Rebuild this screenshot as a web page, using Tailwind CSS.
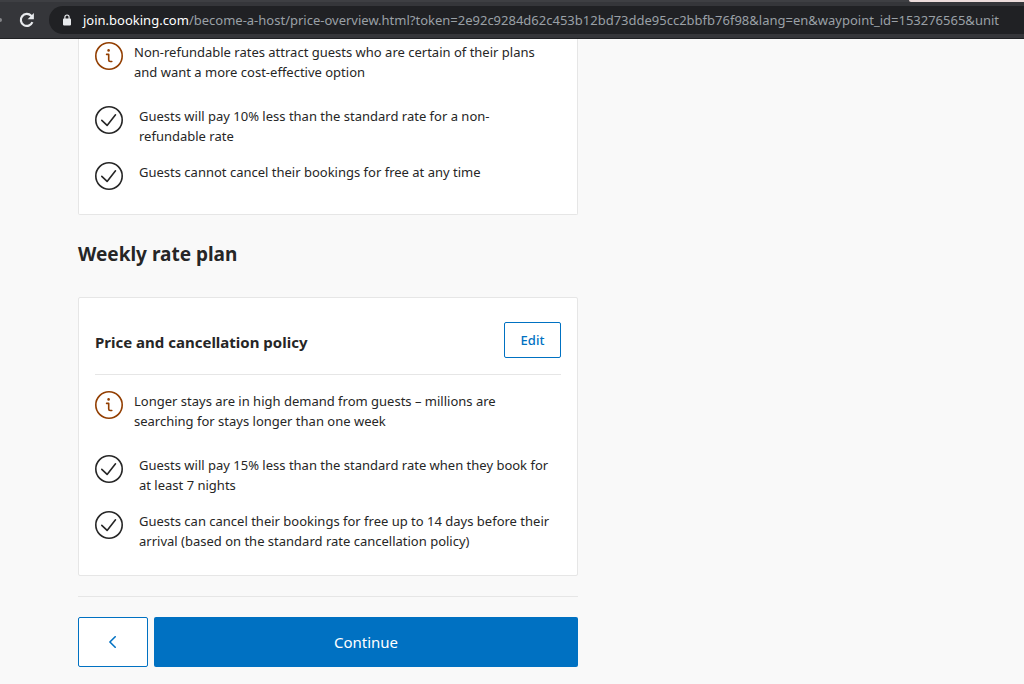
<!DOCTYPE html>
<html lang="en">
<head>
  <meta charset="UTF-8" />
  <meta name="viewport" content="width=device-width, initial-scale=1.0"/>
  <title>Price overview | Booking.com</title>
  <script src="https://cdn.jsdelivr.net/npm/@tailwindcss/browser@4"></script>
</head>
<body class="min-h-screen overflow-x-hidden bg-[#f9f9f9] font-['Noto_Sans',sans-serif] text-[13px] leading-5 text-[#262626]">
  <!-- Icons -->
  <svg class="hidden">
    <symbol id="icon-info" viewBox="0 0 28 28">
      <circle cx="14" cy="14" r="13.2" fill="none" stroke="currentColor" stroke-width="1.6"/>
      <circle cx="13.6" cy="8.4" r="1.3" fill="currentColor"/>
      <path d="M11.6 12.4h2.1v5.6c0 1.1.5 1.5 1.5 1.5h1.6" fill="none" stroke="currentColor" stroke-width="1.6" stroke-linecap="round" stroke-linejoin="round"/>
    </symbol>
    <symbol id="icon-check" viewBox="0 0 28 28">
      <circle cx="14" cy="14" r="13.2" fill="none" stroke="currentColor" stroke-width="1.6"/>
      <path d="M6.8 14.3l5.3 5.1 8.4-10.6" fill="none" stroke="currentColor" stroke-width="1.6" stroke-linecap="round" stroke-linejoin="round"/>
    </symbol>
  </svg>

  <!-- Browser toolbar -->
  <header class="border-b border-[#202124] bg-[#35363a]">
    <div class="flex h-[2px] bg-[#3e3f43]">
      <div class="ml-auto w-[115px] rounded-bl-sm bg-[#ecdcdb]"></div>
    </div>
    <div class="flex items-center pt-1 pb-1">
      <span class="h-1 w-[2px] rounded-r-full bg-[#85868a]"></span>
      <button type="button" aria-label="Reload" class="ml-[17px] text-[#e8eaed]">
        <svg class="size-4" viewBox="0 0 16 16" fill="none" stroke="currentColor" stroke-width="2.2">
          <path d="M13.4 10.2A6 6 0 1 1 12.2 3.8L13.6 5.2"/>
          <path d="M14.9 1v6.3H8.6z" fill="currentColor" stroke="none"/>
        </svg>
      </button>
      <div role="textbox" aria-label="Address" class="ml-[14px] flex h-7 min-w-0 flex-1 items-center overflow-hidden rounded-l-full bg-[#202124] pl-[14px] whitespace-nowrap text-[#9aa0a6]">
        <svg class="mr-[12px] h-3 w-2 shrink-0 text-[#e8eaed]" viewBox="0 0 8 12">
          <rect y="4.4" width="8" height="7" rx=".8" fill="currentColor"/>
          <path d="M1.9 5V3.1a2.1 2.1 0 0 1 4.2 0V5" fill="none" stroke="currentColor" stroke-width="1.2"/>
        </svg>
        <span class="text-white">join.booking.com</span><span>/become-a-host/price-overview.html?token=2e92c9284d62c453b12bd73dde95cc2bbfb76f98&amp;lang=en&amp;waypoint_id=153276565&amp;unit</span>
      </div>
    </div>
  </header>

  <main class="ml-[78px] max-w-[500px]">
    <!-- Non-refundable rate plan -->
    <section class="rounded-b-xs border border-t-0 border-[#e6e6e6] bg-white px-4 pt-[3px] pb-6">
      <div class="mb-6 flex gap-[11px]">
        <svg class="size-7 shrink-0 text-[#923e01]"><use href="#icon-info"/></svg>
        <p>Non-refundable rates attract guests who are certain of their plans<br>and want a more cost-effective option</p>
      </div>
      <ul class="space-y-4">
        <li class="flex gap-4">
          <svg class="size-7 shrink-0"><use href="#icon-check"/></svg>
          <p>Guests will pay 10% less than the standard rate for a non-<br>refundable rate</p>
        </li>
        <li class="flex gap-4">
          <svg class="size-7 shrink-0"><use href="#icon-check"/></svg>
          <p>Guests cannot cancel their bookings for free at any time</p>
        </li>
      </ul>
    </section>

    <!-- Weekly rate plan -->
    <h2 class="mt-6 mb-7 text-[19px] leading-[30px] font-bold">Weekly rate plan</h2>
    <section class="rounded-xs border border-[#e6e6e6] bg-white px-4 py-6">
      <div class="mb-4 flex items-center justify-between border-b border-[#e6e6e6] pb-4">
        <h3 class="pt-1 text-[15px] font-bold">Price and cancellation policy</h3>
        <button type="button" class="h-9 w-[57px] rounded-xs border border-[#0071c2] bg-white font-medium text-[#0071c2]">Edit</button>
      </div>
      <div class="mb-6 flex gap-[11px]">
        <svg class="size-7 shrink-0 text-[#923e01]"><use href="#icon-info"/></svg>
        <p>Longer stays are in high demand from guests – millions are<br>searching for stays longer than one week</p>
      </div>
      <ul class="space-y-4">
        <li class="flex gap-4">
          <svg class="size-7 shrink-0"><use href="#icon-check"/></svg>
          <p>Guests will pay 15% less than the standard rate when they book for<br>at least 7 nights</p>
        </li>
        <li class="flex gap-4">
          <svg class="size-7 shrink-0"><use href="#icon-check"/></svg>
          <p>Guests can cancel their bookings for free up to 14 days before their<br>arrival (based on the standard rate cancellation policy)</p>
        </li>
      </ul>
    </section>

    <!-- Navigation -->
    <div class="mt-5 flex gap-[6px] border-t border-[#e6e6e6] pt-5">
      <button type="button" aria-label="Back" class="flex h-[50px] w-[70px] items-center justify-center rounded-xs border border-[#0071c2] bg-white text-[#0071c2]">
        <svg class="h-3 w-2" viewBox="0 0 8 12" fill="none" stroke="currentColor" stroke-width="1.6" stroke-linecap="round" stroke-linejoin="round"><path d="M6.2 .8L.9 6l5.3 5.2"/></svg>
      </button>
      <button type="button" class="h-[50px] flex-1 rounded-xs bg-[#0071c2] text-[15px] text-white">Continue</button>
    </div>
  </main>
</body>
</html>
